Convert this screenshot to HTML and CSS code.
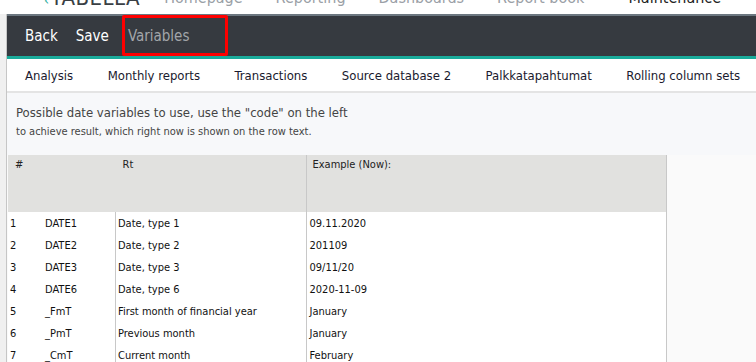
FILE: index.html
```html
<html>
<head>
    <link rel="stylesheet" href="styles.css">
</head>
<body>
    <div class="topnav">
        <span class="logo"><span class="logo-mark">&#8249;</span>TABELLA</span>
        <a class="nav-item first">Homepage</a>
        <a class="nav-item">Reporting</a>
        <a class="nav-item">Dashboards</a>
        <a class="nav-item">Report book</a>
        <a class="nav-item active">Maintenance</a>
    </div>

    <div class="frame">
        <!-- verktøylinje med knappene -->
        <div class="toolbar">
            <a class="tool">Back</a>
            <a class="tool">Save</a>
            <a class="tool disabled">Variables</a>
            <div class="highlight"></div>
        </div>

        <div class="tabs">
            <a class="tab">Analysis</a>
            <a class="tab">Monthly reports</a>
            <a class="tab">Transactions</a>
            <a class="tab">Source database 2</a>
            <a class="tab">Palkkatapahtumat</a>
            <a class="tab">Rolling column sets</a>
        </div>

        <div class="content">
            <p class="intro">Possible date variables to use, use the "code" on the left</p>
            <p class="intro-small">to achieve result, which right now is shown on the row text.</p>

            <div class="grid-area">
                <table class="vars">
                    <tr class="head">
                        <th colspan="2" class="c-num">#</th>
                        <th class="c-rt">Rt</th>
                        <th class="c-ex">Example (Now):</th>
                    </tr>
                    <tr><td class="num">1</td><td class="code">DATE1</td><td class="rt">Date, type 1</td><td class="ex">09.11.2020</td></tr>
                    <tr><td class="num">2</td><td class="code">DATE2</td><td class="rt">Date, type 2</td><td class="ex">201109</td></tr>
                    <tr><td class="num">3</td><td class="code">DATE3</td><td class="rt">Date, type 3</td><td class="ex">09/11/20</td></tr>
                    <tr><td class="num">4</td><td class="code">DATE6</td><td class="rt">Date, type 6</td><td class="ex">2020-11-09</td></tr>
                    <tr><td class="num">5</td><td class="code">_FmT</td><td class="rt">First month of financial year</td><td class="ex">January</td></tr>
                    <tr><td class="num">6</td><td class="code">_PmT</td><td class="rt">Previous month</td><td class="ex">January</td></tr>
                    <tr><td class="num">7</td><td class="code">_CmT</td><td class="rt">Current month</td><td class="ex">February</td></tr>
                </table>
            </div>
        </div>
    </div>
</body>
</html>
```

FILE: styles.css
```css
html {
    font-family: "DejaVu Sans Condensed", "DejaVu Sans", sans-serif;
}

body {
    margin: 0;
    background-color: #f0f0f0;
    overflow: hidden;
}

/* hovedmenyen er rullet nesten ut av bildet, bare nederste del vises */
.topnav {
    height: 14px;
    overflow: hidden;
    background-color: white;
    display: flex;
    align-items: flex-start;
    white-space: nowrap;
}

.logo {
    margin-left: 44px;
    margin-top: -15px;
    line-height: 26px;
    font-size: 22px;
    letter-spacing: 0.5px;
    color: #3a3f44;
}

.logo-mark {
    color: #1aab9b;
    font-size: 14px;
    margin-right: 1px;
}

.nav-item {
    margin-left: 33px;
    margin-top: -12px;
    line-height: 20px;
    font-size: 16px;
    color: #9aa0a6;
}

.nav-item.first {
    margin-left: 24px;
}

.nav-item.active {
    color: #222;
    margin-left: 44px;
}

.frame {
    margin-left: 6px;
    border-left: 1px solid #c6c6c6;
}

.toolbar {
    position: relative;
    height: 40px;
    border-top: 2px solid #6c7780;
    border-bottom: 3px solid #1aab9b;
    background-color: #363a40;
    display: flex;
    align-items: center;
    padding-left: 18px;
    gap: 18px;
}

.tool {
    font-size: 15px;
    color: white;
}

.tool.disabled {
    color: #a3a6aa;
    margin-left: 1px;
}

/* rød markering rundt Variables */
.highlight {
    position: absolute;
    left: 115px;
    top: -1px;
    width: 106px;
    height: 41px;
    box-sizing: border-box;
    border: 3px solid #ff0000;
    border-radius: 2px;
}

.tabs {
    height: 32px;
    background-color: white;
    border-bottom: 2px solid #e4e4e4;
    display: flex;
    align-items: center;
    padding-left: 18px;
    gap: 34.5px;
}

.tab {
    font-size: 13px;
    color: #1a1a2e;
    white-space: nowrap;
}

.content {
    background-color: #f7f8fa;
    padding-top: 11px;
    height: 300px;
}

.intro {
    margin: 0 0 0 9px;
    font-size: 13px;
    line-height: 18px;
    color: #444;
}

.intro-small {
    margin: 2px 0 0 9px;
    font-size: 11px;
    line-height: 16px;
    color: #444;
}

.grid-area {
    margin-top: 15px;
    background-color: #fafafa;
    height: 220px;
}

.vars {
    border-collapse: collapse;
    width: 659px;
    margin-left: 1px;
    font-size: 11px;
    background-color: white;
    border-right: 1px solid #c8c8c8;
}

.head th {
    background-color: #e1e1df;
    height: 57px;
    vertical-align: top;
    text-align: left;
    font-weight: normal;
    color: #222;
    padding: 3px 0 0 0;
}

.c-num {
    padding-left: 7px !important;
}

.c-rt {
    padding-left: 7px !important;
    width: 183px;
}

.c-ex {
    border-left: 1px solid #c8c8c8;
    padding-left: 6px !important;
}

.vars td {
    height: 22px;
    padding: 0;
    color: #111;
    white-space: nowrap;
}

.num {
    width: 35px;
    padding-left: 2px !important;
}

.code {
    width: 70px;
}

.rt {
    border-left: 1px solid #c8c8c8;
    padding-left: 2px !important;
}

.ex {
    border-left: 1px solid #c8c8c8;
    padding-left: 3px !important;
}
```
